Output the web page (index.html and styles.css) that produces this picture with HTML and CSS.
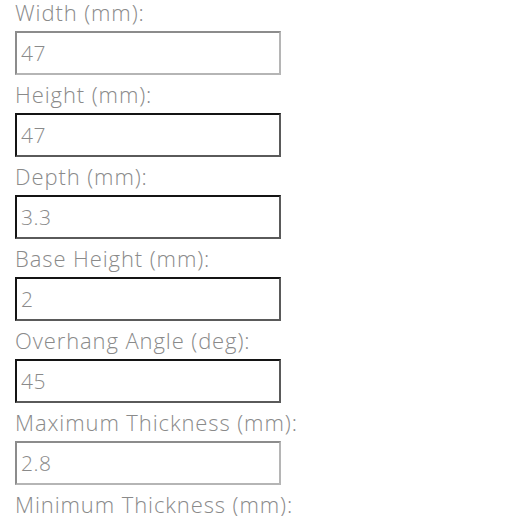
FILE: index.html
```html
<!DOCTYPE html>
<html>
<head>
<meta charset="utf-8">
<link rel="stylesheet" href="styles.css">
</head>
<body>
<form class="form">
  <label class="label">Width (mm):</label>
  <input class="field field-light" type="text" value="47">
  <label class="label">Height (mm):</label>
  <input class="field field-dark" type="text" value="47">
  <label class="label">Depth (mm):</label>
  <input class="field field-dark" type="text" value="3.3">
  <label class="label">Base Height (mm):</label>
  <input class="field field-dark" type="text" value="2">
  <label class="label">Overhang Angle (deg):</label>
  <input class="field field-dark" type="text" value="45">
  <label class="label">Maximum Thickness (mm):</label>
  <input class="field field-light" type="text" value="2.8">
  <label class="label">Minimum Thickness (mm):</label>
</form>
</body>
</html>
```
FILE: styles.css
```css
html, body {
  margin: 0;
  padding: 0;
  background: #ffffff;
}
.form {
  display: flex;
  flex-direction: column;
  align-items: flex-start;
  margin-top: -7px;
  padding-left: 15px;
  font-family: "Open Sans", "Liberation Sans", sans-serif;
}
.label {
  display: block;
  height: 38px;
  line-height: 38px;
  font-size: 22px;
  font-weight: 300;
  letter-spacing: 0.9px;
  color: #8a8a8a;
  white-space: nowrap;
}
.field {
  box-sizing: border-box;
  width: 266px;
  height: 44px;
  margin: 0;
  padding: 0 4px;
  font-family: "Open Sans", "Liberation Sans", sans-serif;
  font-size: 21px;
  font-weight: 300;
  letter-spacing: 0.5px;
  color: #8a8a8a;
  background: #ffffff;
  outline: none;
}
.field-light {
  border: 2px solid;
  border-color: #8c8c8c #b5b5b5 #b5b5b5 #8c8c8c;
}
.field-dark {
  border: 2px solid;
  border-color: #141414 #5a5a5a #5a5a5a #141414;
}
```
